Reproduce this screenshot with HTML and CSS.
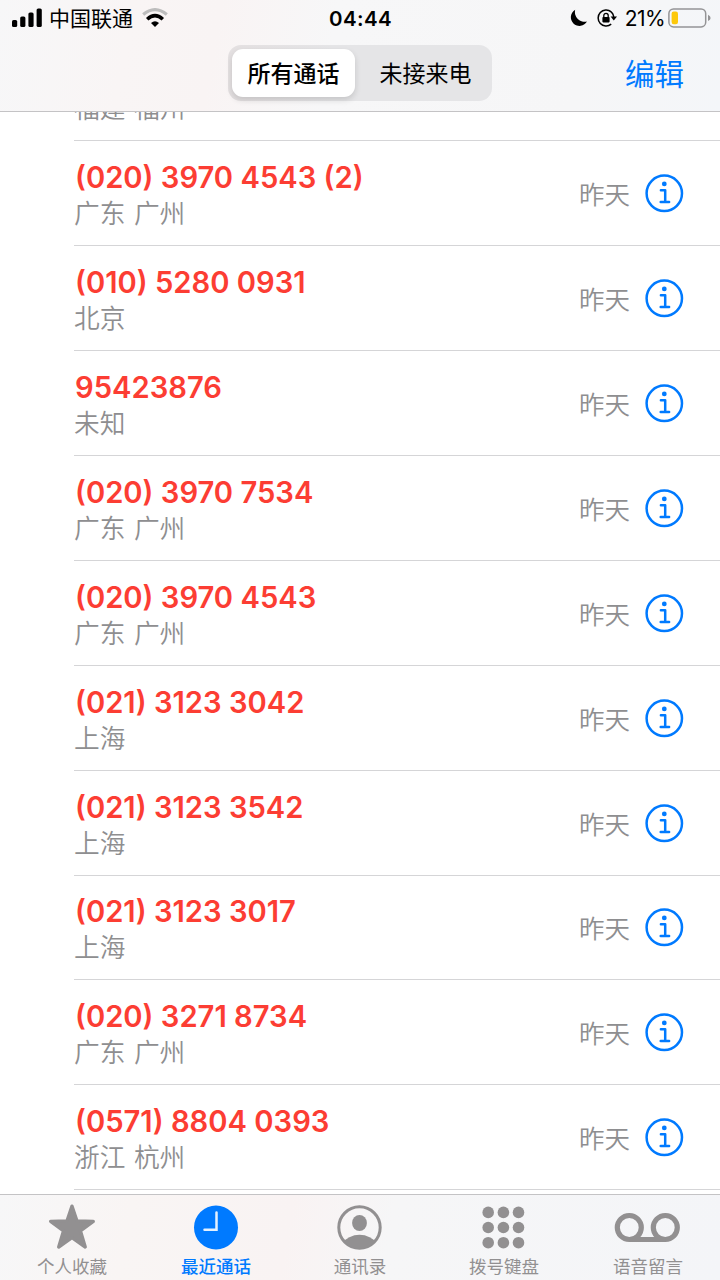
FILE: index.html
```html
<!DOCTYPE html>
<html lang="zh-CN">
<head>
    <meta charset="UTF-8">
    <title>最近通话</title>
    <link rel="stylesheet" href="styles.css">
</head>
<body>
    <svg class="defs" width="0" height="0">
        <symbol id="info" viewBox="0 0 40 40">
            <circle cx="20.3" cy="20.3" r="17.7" fill="none" stroke="currentColor" stroke-width="2.5"/>
            <circle cx="20.3" cy="10.9" r="2.4" fill="currentColor"/>
            <path d="M16.9 17.2H21.2V28.9M16.7 28.9H25.1" fill="none" stroke="currentColor" stroke-width="2.5" stroke-linecap="round" stroke-linejoin="round"/>
        </symbol>
    </svg>

    <div class="phone">
        <header class="header">
            <div class="status">
                <div class="status-left">
                    <svg class="signal" width="30" height="20" viewBox="0 0 30 20">
                        <rect x="0" y="12" width="5.2" height="7" rx="1.6"/>
                        <rect x="8.2" y="8.5" width="5.2" height="10.5" rx="1.6"/>
                        <rect x="16.4" y="4.5" width="5.2" height="14.5" rx="1.6"/>
                        <rect x="24.6" y="0.5" width="5.2" height="18.5" rx="1.6"/>
                    </svg>
                    <span class="carrier">中国联通</span>
                    <svg class="wifi" width="26" height="20" viewBox="0 0 26 20">
                        <path d="M1.2 6.5Q13 -3.2 24.8 6.5" fill="none" stroke="#bdbdbd" stroke-width="3.2"/>
                        <path d="M5.2 11.3Q13 4.1 20.8 11.3" fill="none" stroke="#000" stroke-width="3.6"/>
                        <path d="M9 15.1Q13 11.4 17 15.1L13 19Z"/>
                    </svg>
                </div>
                <div class="clock">04:44</div>
                <div class="status-right">
                    <svg class="moon" width="18" height="18" viewBox="0 0 18 18">
                        <path d="M5.2 0.8A8.6 8.6 0 1 0 17 12.4A9.6 9.6 0 0 1 5.2 0.8Z"/>
                    </svg>
                    <svg class="lock" width="20" height="18" viewBox="0 0 20 18">
                        <path d="M14.2 2.8A8 8 0 1 0 14.2 15.2M13.2 2.1A8 8 0 0 1 16.7 8.5" fill="none" stroke="#000" stroke-width="1.5"/>
                        <path d="M13.6 7.6H20L16.8 11.6Z"/>
                        <rect x="5.4" y="8" width="7.2" height="5.4" rx="0.8"/>
                        <path d="M6.8 8.3V6.6A2.2 2.2 0 0 1 11.2 6.6V8.3" fill="none" stroke="#000" stroke-width="1.3"/>
                    </svg>
                    <span class="percent">21%</span>
                    <svg class="battery" width="43" height="20" viewBox="0 0 43 20">
                        <rect x="0.9" y="0.9" width="36.8" height="18" rx="4.6" fill="none" stroke="#949496" stroke-width="1.5"/>
                        <rect x="3.6" y="3.6" width="6.4" height="12.6" rx="2.2" fill="#fdc80a"/>
                        <path d="M40 6.7Q42.6 7.9 42.6 9.9T40 13.1Z" fill="#949496"/>
                    </svg>
                </div>
            </div>
            <div class="nav">
                <div class="segmented">
                    <div class="segment active">所有通话</div>
                    <div class="segment">未接来电</div>
                </div>
                <a class="edit">编辑</a>
            </div>
        </header>

        <main class="calls">
            <ul class="call-list">
                <li class="call">
                    <div class="caller">
                        <div class="number">&nbsp;</div>
                        <div class="place">福建 福州</div>
                    </div>
                </li>
                <li class="call">
                    <div class="caller">
                        <div class="number">(020) 3970 4543 (2)</div>
                        <div class="place">广东 广州</div>
                    </div>
                    <span class="date">昨天</span>
                    <svg class="info"><use href="#info"/></svg>
                </li>
                <li class="call">
                    <div class="caller">
                        <div class="number">(010) 5280 0931</div>
                        <div class="place">北京</div>
                    </div>
                    <span class="date">昨天</span>
                    <svg class="info"><use href="#info"/></svg>
                </li>
                <li class="call">
                    <div class="caller">
                        <div class="number">95423876</div>
                        <div class="place">未知</div>
                    </div>
                    <span class="date">昨天</span>
                    <svg class="info"><use href="#info"/></svg>
                </li>
                <li class="call">
                    <div class="caller">
                        <div class="number">(020) 3970 7534</div>
                        <div class="place">广东 广州</div>
                    </div>
                    <span class="date">昨天</span>
                    <svg class="info"><use href="#info"/></svg>
                </li>
                <li class="call">
                    <div class="caller">
                        <div class="number">(020) 3970 4543</div>
                        <div class="place">广东 广州</div>
                    </div>
                    <span class="date">昨天</span>
                    <svg class="info"><use href="#info"/></svg>
                </li>
                <li class="call">
                    <div class="caller">
                        <div class="number">(021) 3123 3042</div>
                        <div class="place">上海</div>
                    </div>
                    <span class="date">昨天</span>
                    <svg class="info"><use href="#info"/></svg>
                </li>
                <li class="call">
                    <div class="caller">
                        <div class="number">(021) 3123 3542</div>
                        <div class="place">上海</div>
                    </div>
                    <span class="date">昨天</span>
                    <svg class="info"><use href="#info"/></svg>
                </li>
                <li class="call">
                    <div class="caller">
                        <div class="number">(021) 3123 3017</div>
                        <div class="place">上海</div>
                    </div>
                    <span class="date">昨天</span>
                    <svg class="info"><use href="#info"/></svg>
                </li>
                <li class="call">
                    <div class="caller">
                        <div class="number">(020) 3271 8734</div>
                        <div class="place">广东 广州</div>
                    </div>
                    <span class="date">昨天</span>
                    <svg class="info"><use href="#info"/></svg>
                </li>
                <li class="call">
                    <div class="caller">
                        <div class="number">(0571) 8804 0393</div>
                        <div class="place">浙江 杭州</div>
                    </div>
                    <span class="date">昨天</span>
                    <svg class="info"><use href="#info"/></svg>
                </li>
            </ul>
        </main>

        <footer class="tabs">
            <div class="tab">
                <svg width="48" height="48" viewBox="0 0 48 48">
                    <path d="M24 3L29.2 18.3L46 18.7L32.7 28.5L37.7 45.2L24 35.6L10.3 45.2L15.3 28.5L2 18.7L18.8 18.3Z" fill="currentColor" stroke="currentColor" stroke-width="3.4" stroke-linejoin="round" transform="translate(.7 .2) scale(.97)"/>
                </svg>
                <span>个人收藏</span>
            </div>
            <div class="tab active">
                <svg width="48" height="48" viewBox="0 0 48 48">
                    <circle cx="24" cy="24.5" r="22" fill="currentColor"/>
                    <path d="M24.5 9.5V26.8H12.5" fill="none" stroke="#e4f1ff" stroke-width="2.5" stroke-linecap="round"/>
                </svg>
                <span>最近通话</span>
            </div>
            <div class="tab">
                <svg width="48" height="48" viewBox="0 0 48 48">
                    <clipPath id="person-clip"><circle cx="23.5" cy="24.5" r="21"/></clipPath>
                    <circle cx="23.5" cy="24.5" r="20.7" fill="none" stroke="currentColor" stroke-width="3"/>
                    <ellipse cx="23.5" cy="20" rx="7.4" ry="8" fill="currentColor"/>
                    <path d="M4 41.5Q13 31.7 23.5 31.7T43 41.5V48H4Z" fill="currentColor" clip-path="url(#person-clip)"/>
                </svg>
                <span>通讯录</span>
            </div>
            <div class="tab">
                <svg width="48" height="48" viewBox="0 0 48 48" fill="currentColor">
                    <circle cx="8.2" cy="9.4" r="5.8"/>
                    <circle cx="23.4" cy="9.4" r="5.8"/>
                    <circle cx="38.5" cy="9.4" r="5.8"/>
                    <circle cx="8.2" cy="24.5" r="5.8"/>
                    <circle cx="23.4" cy="24.5" r="5.8"/>
                    <circle cx="38.5" cy="24.5" r="5.8"/>
                    <circle cx="8.2" cy="39.7" r="5.8"/>
                    <circle cx="23.4" cy="39.7" r="5.8"/>
                    <circle cx="38.5" cy="39.7" r="5.8"/>
                </svg>
                <span>拨号键盘</span>
            </div>
            <div class="tab">
                <svg width="68" height="48" viewBox="0 0 68 48" fill="none" stroke="currentColor" stroke-width="5.2">
                    <circle cx="15.3" cy="24.5" r="12"/>
                    <circle cx="51.3" cy="24.5" r="12"/>
                    <path d="M15.3 36.5H51.3"/>
                </svg>
                <span>语音留言</span>
            </div>
        </footer>
    </div>
</body>
</html>
```
FILE: styles.css
```css
* {
    box-sizing: border-box;
}

body {
    margin: 0;
    background-color: #fff;
    color: #000;
    font-family: Inter, 'Noto Sans CJK SC', sans-serif;
}

.defs {
    display: none;
}

.phone {
    display: flex;
    flex-direction: column;
    width: 720px;
    height: 1280px;
    overflow: hidden;
}

/* ---- status bar + nav ---- */
.header {
    height: 112px;
    background: linear-gradient(100deg, #f7f7f8 0%, #f9f5f5 18%, #f9f4f4 30%, #f7f7f8 46%, #f6f6f7 80%, #f4f6f9 100%);
    border-bottom: 1px solid #c4c3c5;
}

.status {
    display: grid;
    grid-template-columns: 1fr auto 1fr;
    align-items: center;
    height: 36px;
    padding: 0 9px 0 12px;
}

.status-left,
.status-right {
    display: flex;
    align-items: center;
}

.status-right {
    justify-content: flex-end;
}

.carrier {
    margin: 0 9px 0 7px;
    padding-top: 2px;
    font-size: 21px;
    line-height: 30px;
}

.clock {
    margin-right: 2px;
    font-size: 20.5px;
    font-weight: 600;
    letter-spacing: 0.4px;
}

.lock {
    margin: 0 8px 0 9px;
}

.percent {
    margin-right: 3px;
    font-size: 21px;
    letter-spacing: -0.6px;
}

.nav {
    display: grid;
    grid-template-columns: 1fr auto 1fr;
    align-items: center;
    height: 74px;
    padding: 0 36px;
}

.segmented {
    display: flex;
    grid-column: 2;
    width: 264px;
    height: 56px;
    padding: 4px;
    border-radius: 13px;
    background: linear-gradient(90deg, #e4e0e1, #e5e5e7 40%);
}

.segment {
    flex: 1;
    padding: 1px 0 0 8px;
    border-radius: 11px;
    font-size: 23px;
    line-height: 48px;
    text-align: center;
}

.segment.active {
    flex: 0 0 123px;
    padding-left: 0;
    background-color: #fff;
    font-weight: 500;
    box-shadow: 0 3px 6px rgba(0,0,0,0.14);
}

.edit {
    justify-self: end;
    padding-top: 2px;
    color: #007aff;
    font-size: 29.5px;
    line-height: 40px;
}

/* ---- call list ---- */
.calls {
    flex: 1;
    overflow: hidden;
}

.call-list {
    margin: -75.6px 0 0;
    padding: 0 0 0 74px;
    list-style: none;
}

.call {
    display: flex;
    align-items: center;
    height: 104.9px;
    padding-right: 36px;
    border-bottom: 1px solid #d5d5d7;
}

.caller {
    flex: 1;
    padding-top: 5.4px;
}

.number {
    padding-left: 1px;
    color: #fc3d33;
    font-size: 29.2px;
    font-weight: 600;
    line-height: 37px;
}

.place {
    color: #8e8e90;
    font-size: 25.7px;
    font-weight: 350;
    line-height: 36.4px;
    word-spacing: 1.3px;
}

.date {
    margin-right: 14px;
    padding-bottom: 1px;
    color: #8e8e90;
    font-size: 25.5px;
    font-weight: 350;
}

.info {
    width: 40px;
    height: 40px;
    color: #007aff;
}

/* ---- tab bar ---- */
.tabs {
    display: flex;
    height: 86px;
    border-top: 1px solid #c4c3c5;
    background: linear-gradient(100deg, #f7f7f8 0%, #f9f5f4 18%, #f9f3f3 40%, #f6f6f7 54%, #f4f5f8 100%);
}

.tab {
    display: flex;
    flex: 1;
    flex-direction: column;
    align-items: center;
    gap: 3px;
    padding-top: 8px;
    color: #929091;
    font-size: 17.5px;
    line-height: 26px;
}

.tab svg {
    flex-shrink: 0;
}

.tab.active {
    color: #007aff;
    font-weight: 500;
}
```
